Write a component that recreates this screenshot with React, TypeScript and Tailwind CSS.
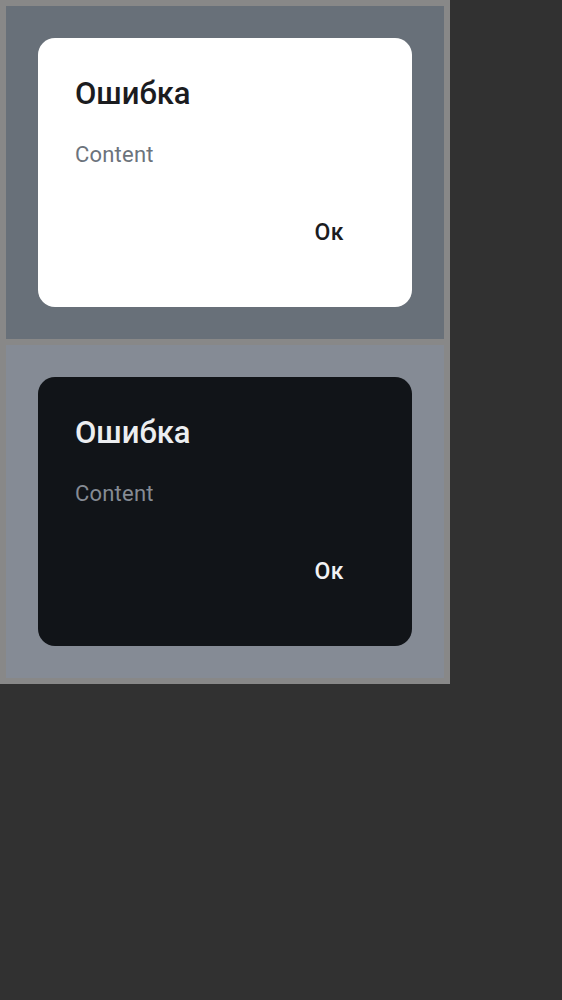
import React from 'react';

type Theme = 'light' | 'dark';

const themes = {
  light: {
    panel: 'bg-[#687079]',
    card: 'bg-white',
    title: 'text-[#1b1c1f]',
    content: 'text-[#6c737c]',
    button: 'text-[#1b1c1f]',
  },
  dark: {
    panel: 'bg-[#858b95]',
    card: 'bg-[#111418]',
    title: 'text-[#eceef0]',
    content: 'text-[#858b94]',
    button: 'text-[#f2f3f5]',
  },
};

function ErrorDialog({ theme }: { theme: Theme }) {
  const t = themes[theme];
  return (
    <div className={`${t.panel} p-[32px]`}>
      <div className={`${t.card} rounded-[17px] pt-[38px] pb-[59px] px-[37px]`}>
        <h2 className={`${t.title} text-[31px] leading-[36px] font-medium`}>Ошибка</h2>
        <p className={`${t.content} mt-[28px] text-[22px] leading-[30px] tracking-[0.2px]`}>Content</p>
        <div className="mt-[48px] flex justify-end pr-[31px]">
          <button className={`${t.button} text-[23px] leading-[30px] font-medium tracking-[0.5px]`}>Ок</button>
        </div>
      </div>
    </div>
  );
}

export default function App() {
  return (
    <div className="min-h-screen bg-[#313131]" style={{ fontFamily: 'Roboto, "Noto Sans", sans-serif' }}>
      <div className="w-[450px] bg-[#888888] p-[6px] flex flex-col gap-[6px]">
        <ErrorDialog theme="light" />
        <ErrorDialog theme="dark" />
      </div>
    </div>
  );
}
